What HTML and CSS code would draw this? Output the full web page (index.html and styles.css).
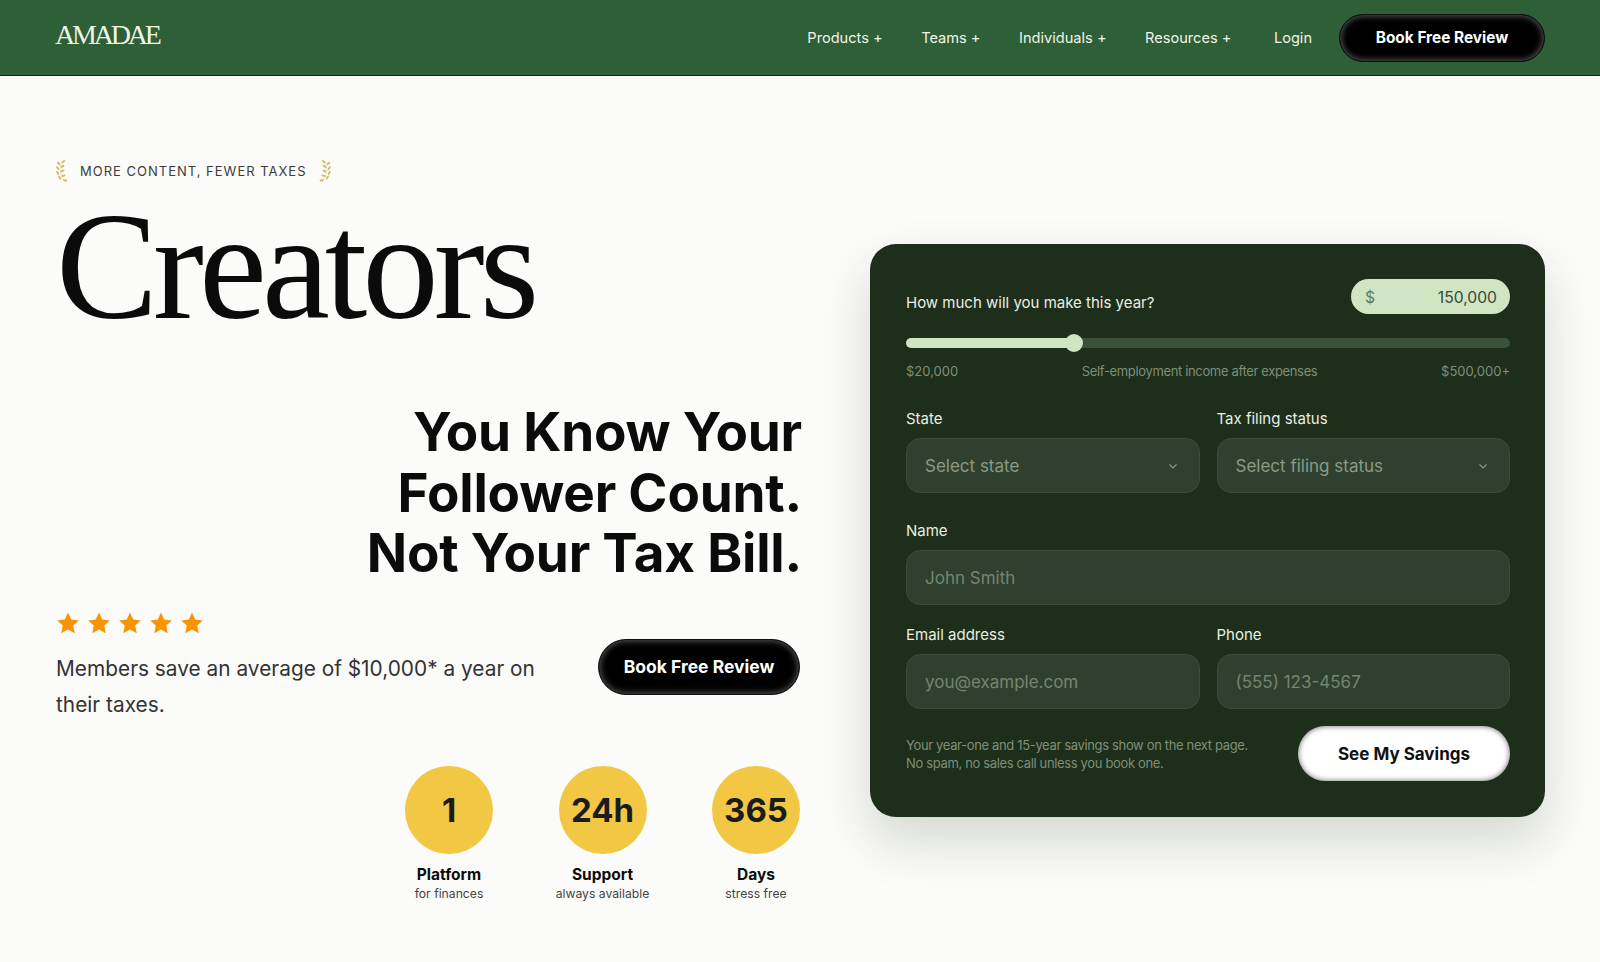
FILE: index.html
```html
<!DOCTYPE html>
<html lang="en">
<head>
    <meta charset="UTF-8">
    <meta name="viewport" content="width=device-width, initial-scale=1.0">
    <title>Amadae - Creators</title>
    <link rel="stylesheet" href="styles.css">
</head>
<body>
    <header class="topbar">
        <a class="logo" href="#">AMADAE</a>
        <nav class="nav">
            <a href="#">Products +</a>
            <a href="#">Teams +</a>
            <a href="#">Individuals +</a>
            <a href="#">Resources +</a>
            <a class="nav-login" href="#">Login</a>
            <a class="btn btn-dark btn-nav" href="#">Book Free Review</a>
        </nav>
    </header>

    <main class="hero">
        <section class="hero-left">
            <div class="eyebrow">
                <svg class="laurel" viewBox="0 0 14 26" aria-hidden="true">
                    <path d="M10 1 C5 7 4 17 11 25" fill="none" stroke="#e6d9b0" stroke-width=".7"/>
                    <g fill="#d4b868">
                        <ellipse cx="9" cy="3" rx="2.4" ry="1.1" transform="rotate(-30 9 3)"/>
                        <ellipse cx="4" cy="5" rx="2.4" ry="1.1" transform="rotate(40 4 5)"/>
                        <ellipse cx="8" cy="8" rx="2.4" ry="1.1" transform="rotate(-30 8 8)"/>
                        <ellipse cx="3" cy="10" rx="2.4" ry="1.1" transform="rotate(50 3 10)"/>
                        <ellipse cx="8" cy="13" rx="2.4" ry="1.1" transform="rotate(-25 8 13)"/>
                        <ellipse cx="3" cy="15" rx="2.4" ry="1.1" transform="rotate(60 3 15)"/>
                        <ellipse cx="9" cy="18" rx="2.4" ry="1.1" transform="rotate(-15 9 18)"/>
                        <ellipse cx="5" cy="20" rx="2.4" ry="1.1" transform="rotate(60 5 20)"/>
                        <ellipse cx="11" cy="23" rx="2.4" ry="1.1" transform="rotate(10 11 23)"/>
                    </g>
                </svg>
                <span>MORE CONTENT, FEWER TAXES</span>
                <svg class="laurel laurel-flip" viewBox="0 0 14 26" aria-hidden="true">
                    <path d="M10 1 C5 7 4 17 11 25" fill="none" stroke="#e6d9b0" stroke-width=".7"/>
                    <g fill="#d4b868">
                        <ellipse cx="9" cy="3" rx="2.4" ry="1.1" transform="rotate(-30 9 3)"/>
                        <ellipse cx="4" cy="5" rx="2.4" ry="1.1" transform="rotate(40 4 5)"/>
                        <ellipse cx="8" cy="8" rx="2.4" ry="1.1" transform="rotate(-30 8 8)"/>
                        <ellipse cx="3" cy="10" rx="2.4" ry="1.1" transform="rotate(50 3 10)"/>
                        <ellipse cx="8" cy="13" rx="2.4" ry="1.1" transform="rotate(-25 8 13)"/>
                        <ellipse cx="3" cy="15" rx="2.4" ry="1.1" transform="rotate(60 3 15)"/>
                        <ellipse cx="9" cy="18" rx="2.4" ry="1.1" transform="rotate(-15 9 18)"/>
                        <ellipse cx="5" cy="20" rx="2.4" ry="1.1" transform="rotate(60 5 20)"/>
                        <ellipse cx="11" cy="23" rx="2.4" ry="1.1" transform="rotate(10 11 23)"/>
                    </g>
                </svg>
            </div>
            <h1 class="title">Creators</h1>
            <h2 class="headline">You Know Your<br>Follower Count.<br>Not Your Tax Bill.</h2>

            <div class="proof">
                <div class="proof-text">
                    <div class="stars">
                        <svg viewBox="0 0 24 24"><path d="M12 1.5l3.2 7 7.6.9-5.6 5.2 1.5 7.6L12 18.4l-6.7 3.8 1.5-7.6L1.2 9.4l7.6-.9z"/></svg>
                        <svg viewBox="0 0 24 24"><path d="M12 1.5l3.2 7 7.6.9-5.6 5.2 1.5 7.6L12 18.4l-6.7 3.8 1.5-7.6L1.2 9.4l7.6-.9z"/></svg>
                        <svg viewBox="0 0 24 24"><path d="M12 1.5l3.2 7 7.6.9-5.6 5.2 1.5 7.6L12 18.4l-6.7 3.8 1.5-7.6L1.2 9.4l7.6-.9z"/></svg>
                        <svg viewBox="0 0 24 24"><path d="M12 1.5l3.2 7 7.6.9-5.6 5.2 1.5 7.6L12 18.4l-6.7 3.8 1.5-7.6L1.2 9.4l7.6-.9z"/></svg>
                        <svg viewBox="0 0 24 24"><path d="M12 1.5l3.2 7 7.6.9-5.6 5.2 1.5 7.6L12 18.4l-6.7 3.8 1.5-7.6L1.2 9.4l7.6-.9z"/></svg>
                    </div>
                    <p>Members save an average of $10,000* a year on their taxes.</p>
                </div>
                <a class="btn btn-dark btn-proof" href="#">Book Free Review</a>
            </div>

            <div class="stats">
                <div class="stat">
                    <div class="stat-circle">1</div>
                    <strong>Platform</strong>
                    <span>for finances</span>
                </div>
                <div class="stat">
                    <div class="stat-circle">24h</div>
                    <strong>Support</strong>
                    <span>always available</span>
                </div>
                <div class="stat">
                    <div class="stat-circle">365</div>
                    <strong>Days</strong>
                    <span>stress free</span>
                </div>
            </div>
        </section>

        <form class="card">
            <div class="income-row">
                <label>How much will you make this year?</label>
                <div class="amount"><span>$</span><span class="amount-value">150,000</span></div>
            </div>
            <div class="slider">
                <div class="slider-fill" style="width: 27.8%"></div>
                <div class="slider-thumb" style="left: 27.8%"></div>
            </div>
            <div class="slider-notes">
                <span>$20,000</span>
                <span class="slider-note-mid">Self-employment income after expenses</span>
                <span>$500,000+</span>
            </div>

            <div class="field-row row-state">
                <div class="field">
                    <label>State</label>
                    <div class="select">Select state
                        <svg viewBox="0 0 12 12"><path d="M2.5 4.5L6 8l3.5-3.5"/></svg>
                    </div>
                </div>
                <div class="field">
                    <label>Tax filing status</label>
                    <div class="select">Select filing status
                        <svg viewBox="0 0 12 12"><path d="M2.5 4.5L6 8l3.5-3.5"/></svg>
                    </div>
                </div>
            </div>

            <div class="field row-name">
                <label>Name</label>
                <input type="text" placeholder="John Smith">
            </div>

            <div class="field-row row-contact">
                <div class="field">
                    <label>Email address</label>
                    <input type="text" placeholder="you@example.com">
                </div>
                <div class="field">
                    <label>Phone</label>
                    <input type="text" placeholder="(555) 123-4567">
                </div>
            </div>

            <div class="card-foot">
                <p>Your year-one and 15-year savings show on the next page.<br>No spam, no sales call unless you book one.</p>
                <a class="btn btn-light" href="#">See My Savings</a>
            </div>
        </form>
    </main>
</body>
</html>
```

FILE: styles.css
```css
* {
    box-sizing: border-box;
}
body {
    margin: 0;
    background-color: #fbfbf9;
    color: #0b0b0b;
    font-family: Inter, "Liberation Sans", sans-serif;
}
a {
    color: inherit;
    text-decoration: none;
}

/* top bar */
.topbar {
    height: 76px;
    padding: 0 55px;
    display: flex;
    align-items: center;
    justify-content: space-between;
    background-color: #2e5f36;
    border-bottom: 1px solid #10240f;
}
.logo {
    font-family: "Liberation Serif", serif;
    font-size: 28px;
    letter-spacing: -3.2px;
    color: #eef6e6;
    margin-top: -6px;
}
.nav {
    display: flex;
    align-items: center;
    font-size: 14.6px;
    color: #f1f5ea;
}
.nav a {
    margin-right: 38.5px;
}
.nav .nav-login {
    margin-left: 4px;
    margin-right: 27px;
}
.nav .btn-nav {
    margin-right: 0;
    width: 206px;
    height: 48px;
    font-size: 15.4px;
}

/* buttons */
.btn {
    display: flex;
    align-items: center;
    justify-content: center;
    border-radius: 999px;
    font-weight: 700;
}
.btn-dark {
    background-color: #000;
    color: #fff;
    border: 1px solid #111;
    box-shadow: inset 0 0 6px 1px rgba(255,255,255,0.35);
}
.btn-light {
    width: 212px;
    height: 55px;
    flex-shrink: 0;
    background-color: #fff;
    color: #111;
    font-size: 17px;
    box-shadow: inset 0 0 5px 1px rgba(0,0,0,0.45);
}

/* hero */
.hero {
    display: flex;
    justify-content: space-between;
    align-items: flex-start;
    padding: 0 55px;
}
.hero-left {
    width: 745px;
    padding-top: 82px;
}
.eyebrow {
    display: flex;
    align-items: center;
    height: 26px;
    font-size: 13px;
    letter-spacing: 1px;
    color: #3c3c3c;
}
.eyebrow span {
    margin: 0 12px 0 12px;
}
.laurel {
    width: 13px;
    height: 26px;
}
.laurel-flip {
    transform: scaleX(-1);
}
.title {
    margin: 8px 0 0 1px;
    font-family: "Liberation Serif", serif;
    font-weight: 400;
    font-size: 153px;
    line-height: 150px;
    letter-spacing: -5px;
}
.headline {
    margin: 60px -2px 0 0;
    text-align: right;
    font-size: 53px;
    line-height: 60.5px;
    font-weight: 700;
    letter-spacing: -0.2px;
}

/* rating + cta */
.proof {
    display: flex;
    justify-content: space-between;
    margin-top: 27px;
}
.proof-text {
    width: 490px;
}
.stars {
    display: flex;
    gap: 7px;
    height: 24px;
    margin-left: 1px;
}
.stars svg {
    width: 24px;
    height: 24px;
    fill: #f79400;
}
.proof-text p {
    margin: 16px 0 0 1px;
    font-size: 20.85px;
    line-height: 36px;
    color: #333;
}
.btn-proof {
    width: 202px;
    height: 56px;
    margin-top: 28px;
    font-size: 17.5px;
}

/* stats */
.stats {
    display: flex;
    justify-content: flex-end;
    gap: 65.5px;
    margin-top: 43px;
}
.stat {
    width: 88px;
    display: flex;
    flex-direction: column;
    align-items: center;
    white-space: nowrap;
}
.stat-circle {
    width: 88px;
    height: 88px;
    margin-bottom: 11px;
    display: flex;
    align-items: center;
    justify-content: center;
    border-radius: 50%;
    background-color: #f2c744;
    color: #1b1b1b;
    font-size: 33px;
    font-weight: 700;
}
.stat strong {
    font-size: 15.5px;
    line-height: 20px;
}
.stat span {
    font-size: 12.2px;
    line-height: 18px;
    color: #444;
}

/* form card */
.card {
    width: 675px;
    height: 573px;
    margin-top: 168px;
    padding: 35px 35px 35px 36px;
    background-color: #1d2e1b;
    border-radius: 26px;
    box-shadow: 0 24px 50px rgba(40,60,40,0.18);
    color: #e9eee2;
    font-size: 15px;
}
.income-row {
    display: flex;
    justify-content: space-between;
    align-items: center;
    height: 35px;
}
.income-row label {
    margin-top: 12px;
}
.amount {
    width: 159px;
    height: 35px;
    padding: 1px 13px 0 14px;
    display: flex;
    justify-content: space-between;
    align-items: center;
    border-radius: 18px;
    background-color: #cfe5c4;
    color: #3a4a37;
    font-size: 15.7px;
}
.amount span:first-child {
    color: #5f7a5c;
}
.slider {
    position: relative;
    height: 10px;
    margin-top: 24px;
    border-radius: 5px;
    background-color: #3a513a;
}
.slider-fill {
    height: 10px;
    border-radius: 5px;
    background-color: #cfe5c4;
}
.slider-thumb {
    position: absolute;
    top: -4px;
    width: 18px;
    height: 18px;
    margin-left: -9px;
    border-radius: 50%;
    background-color: #cfe5c4;
}
.slider-notes {
    display: flex;
    justify-content: space-between;
    margin-top: 14px;
    font-size: 13px;
    line-height: 18px;
    color: #7d8f78;
}
.slider-note-mid {
    letter-spacing: -0.35px;
}
.field-row {
    display: grid;
    grid-template-columns: 1fr 1fr;
    gap: 17px;
}
.row-state {
    margin-top: 29px;
}
.row-name {
    margin-top: 28px;
}
.row-contact {
    margin-top: 20px;
}
.field label {
    display: block;
    height: 20px;
    line-height: 20px;
    margin-bottom: 9px;
}
.select,
.field input {
    display: flex;
    align-items: center;
    justify-content: space-between;
    width: 100%;
    height: 55px;
    padding: 0 20px 0 18px;
    border: 1px solid #3a4d39;
    border-radius: 14px;
    background-color: #2f412e;
    color: #8b9a85;
    font-family: inherit;
    font-size: 17px;
}
.field input {
    outline: none;
}
.field input::placeholder {
    color: #748570;
    opacity: 1;
}
.select svg {
    width: 12px;
    height: 12px;
    fill: none;
    stroke: #8b9a85;
    stroke-width: 1.2;
}
.card-foot {
    display: flex;
    justify-content: space-between;
    align-items: center;
    margin-top: 17px;
}
.card-foot p {
    margin: 0;
    font-size: 13px;
    line-height: 18px;
    letter-spacing: -0.35px;
    color: #7d8f78;
}
```
